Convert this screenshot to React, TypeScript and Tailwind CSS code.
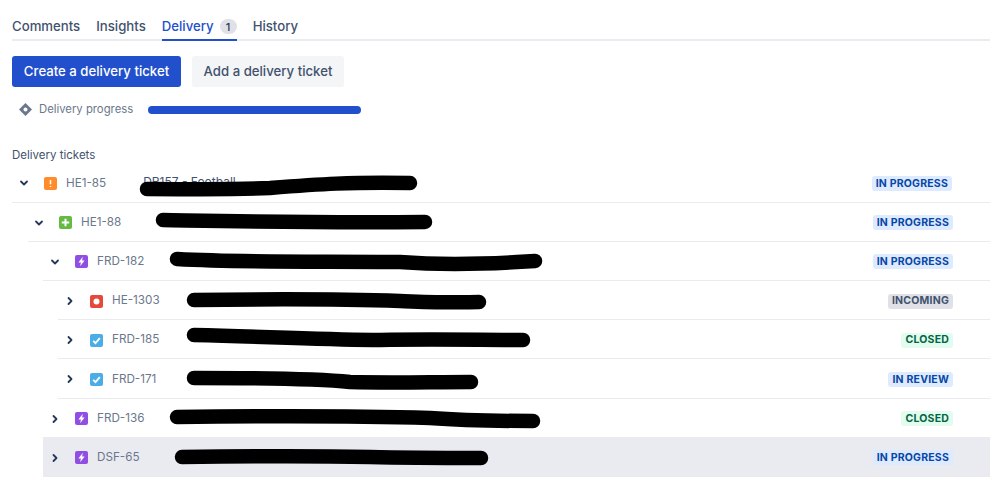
import { ReactNode } from 'react'
import { ChevronDown, ChevronRight } from 'lucide-react'

type IssueType = 'incident' | 'story' | 'epic' | 'bug' | 'task'
type Status = 'IN PROGRESS' | 'INCOMING' | 'CLOSED' | 'IN REVIEW'

interface Ticket {
    id: string
    title: string
    type: IssueType
    status: Status
    open: boolean
    rowClass: string
}

const tickets: Ticket[] = [
    { id: 'HE1-85', title: 'DR157 - Football', type: 'incident', status: 'IN PROGRESS', open: true, rowClass: 'ml-0 pl-[6px] pr-[38px]' },
    { id: 'HE1-88', title: '', type: 'story', status: 'IN PROGRESS', open: true, rowClass: 'ml-[16px] pl-[5px]' },
    { id: 'FRD-182', title: '', type: 'epic', status: 'IN PROGRESS', open: true, rowClass: 'ml-[31px] pl-[6px]' },
    { id: 'HE-1303', title: '', type: 'bug', status: 'INCOMING', open: false, rowClass: 'ml-[46px] pl-[6px]' },
    { id: 'FRD-185', title: '', type: 'task', status: 'CLOSED', open: false, rowClass: 'ml-[46px] pl-[6px]' },
    { id: 'FRD-171', title: '', type: 'task', status: 'IN REVIEW', open: false, rowClass: 'ml-[46px] pl-[6px]' },
    { id: 'FRD-136', title: '', type: 'epic', status: 'CLOSED', open: false, rowClass: 'ml-[31px] pl-[6px]' },
    { id: 'DSF-65', title: '', type: 'epic', status: 'IN PROGRESS', open: false, rowClass: 'ml-[31px] pl-[6px] bg-[#e9ebf0] border-[#d9dbe0]' },
]

// black marker strokes that hide the ticket titles
const scribbles = [
    'M147 189 C190 189 230 190 270 188 C320 184 350 182 410 183',
    'M163 220 C220 221 300 223 425 222',
    'M177 259 C250 263 330 261 400 262 C440 265 490 264 535 261',
    'M194 300 C270 299 340 299 400 301 C430 302 450 303 479 302',
    'M194 335 C280 337 330 340 380 340 C430 339 480 340 523 340',
    'M194 378 C260 378 320 379 350 382 C390 383 430 382 471 382',
    'M177 417 C260 416 360 416 430 418 C470 421 500 421 533 421',
    'M182 457 C260 456 320 456 370 457 C410 458 450 458 481 458',
]

const statusStyles: Record<Status, string> = {
    'IN PROGRESS': 'bg-[#deebff] text-[#0747a6]',
    INCOMING: 'bg-[#dfe1e6] text-[#42526e]',
    CLOSED: 'bg-[#e3fcef] text-[#006644]',
    'IN REVIEW': 'bg-[#deebff] text-[#0747a6]',
}

function IssueIcon({ type }: { type: IssueType }) {
    const bg = {
        incident: 'bg-[#ff8b2b]',
        story: 'bg-[#65ba43]',
        epic: 'bg-[#904ee2]',
        bug: 'bg-[#e5493a]',
        task: 'bg-[#4bade8]',
    }[type]

    let glyph: ReactNode = null
    if (type === 'incident') glyph = <path d="M6.5 3v4.2M6.5 9v1" stroke="white" strokeWidth="1.5" />
    if (type === 'story') glyph = <path d="M6.5 2.8v7.4M2.8 6.5h7.4" stroke="white" strokeWidth="2" />
    if (type === 'epic') glyph = <path d="M7.8 1.8 3.4 7.4h2.5l-.7 3.8 4.4-5.6H7.1z" fill="white" />
    if (type === 'bug') glyph = <circle cx="6.5" cy="6.5" r="3" fill="white" />
    if (type === 'task') glyph = <path d="M3.2 6.8l2.3 2.3 4.3-5" stroke="white" strokeWidth="1.8" fill="none" />

    return (
        <span className={`flex h-[13px] w-[13px] shrink-0 rounded-[2px] ${bg}`}>
            <svg width="13" height="13" viewBox="0 0 13 13">{glyph}</svg>
        </span>
    )
}

function TicketRow({ ticket }: { ticket: Ticket }) {
    const Chevron = ticket.open ? ChevronDown : ChevronRight
    return (
        <div className={`flex h-[39.2px] items-center border-b-[1.5px] border-[#e9ebef] pr-[37px] pt-[2px] ${ticket.rowClass}`}>
            <Chevron className="h-[12px] w-[12px] shrink-0 text-[#253858]" strokeWidth={3.6} />
            <span className="ml-[14px]"><IssueIcon type={ticket.type} /></span>
            <span className="ml-[9px] text-[11.7px] text-[#6b778c]">{ticket.id}</span>
            {ticket.title && (
                <span className="ml-[37px] -mt-[2px] text-[12px] text-[#42526e]">{ticket.title}</span>
            )}
            <span className={`ml-auto flex h-[15px] items-center rounded-[3px] px-[4px] text-[10.5px] font-bold tracking-[0.2px] ${statusStyles[ticket.status]}`}>
                {ticket.status}
            </span>
        </div>
    )
}

export default function App() {
    return (
        <div className="relative h-[479px] w-[998px] overflow-hidden bg-white pl-[12px] pr-[8px] pt-[12px] font-['Inter',_'Liberation_Sans',_sans-serif]">
            {/* TABS */}
            <div className="flex h-[29px] items-start gap-[16px] border-b-2 border-[#ebecf0] text-[13.2px] font-medium text-[#42526e]">
                <span className="pt-[5px] leading-[18px]">Comments</span>
                <span className="pt-[5px] leading-[18px]">Insights</span>
                <span className="flex h-[29px] items-start gap-[6px] border-b-2 border-[#2250cd] pt-[5px] leading-[18px] text-[#2250cd]">
                    Delivery
                    <span className="mt-[2px] flex h-[15px] w-[17px] items-center justify-center rounded-full bg-[#dfe1e6] text-[11px] text-[#253858]">1</span>
                </span>
                <span className="pt-[5px] leading-[18px]">History</span>
            </div>

            {/* ACTIONS */}
            <div className="mt-[15px] flex gap-[11px]">
                <button className="h-[31px] w-[169px] rounded-[3px] bg-[#2250cd] text-[13.2px] font-medium text-white">
                    Create a delivery ticket
                </button>
                <button className="h-[31px] w-[152px] rounded-[3px] bg-[#f4f5f7] text-[13.2px] font-medium text-[#42526e]">
                    Add a delivery ticket
                </button>
            </div>

            {/* PROGRESS */}
            <div className="mt-[15px] flex h-[14px] items-center pl-[7px]">
                <svg width="13" height="13" viewBox="0 0 13 13" className="shrink-0">
                    <path d="M6.5 0 13 6.5 6.5 13 0 6.5z" fill="#6b778c" />
                    <circle cx="6.5" cy="6.5" r="2" fill="white" />
                </svg>
                <span className="ml-[7px] text-[11.3px] text-[#6b778c]">Delivery progress</span>
                <div className="ml-[15px] mt-[2px] h-[8px] w-[213px] rounded-full bg-[#2250cd]" />
            </div>

            {/* TICKETS */}
            <div className="mt-[32px] h-[14px] text-[11.5px] leading-[14px] text-[#42526e]">Delivery tickets</div>
            <div className="mt-[1.4px]">
                {tickets.map((ticket) => (
                    <TicketRow key={ticket.id} ticket={ticket} />
                ))}
            </div>

            {/* MARKER OVERLAY */}
            <svg className="pointer-events-none absolute left-0 top-0" width="998" height="479" viewBox="0 0 998 479">
                {scribbles.map((d) => (
                    <path key={d} d={d} fill="none" stroke="black" strokeWidth="14.5" strokeLinecap="round" />
                ))}
            </svg>
        </div>
    )
}
